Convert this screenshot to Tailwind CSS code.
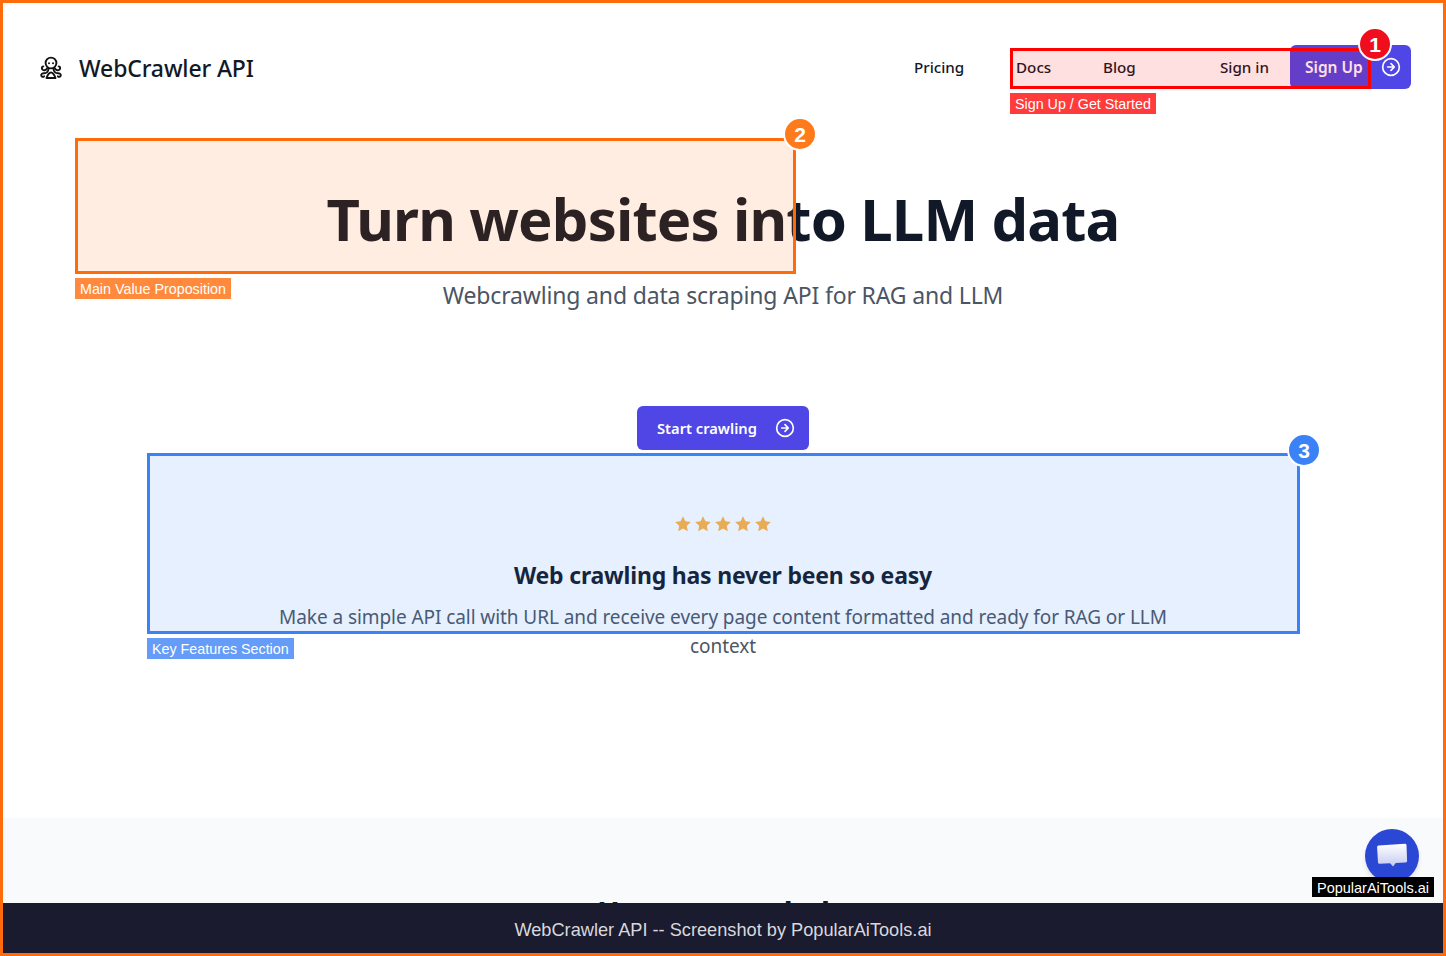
<!DOCTYPE html>
<html lang="en">
<head>
  <meta charset="UTF-8" />
  <title>WebCrawler API</title>
  <script src="https://cdn.jsdelivr.net/npm/@tailwindcss/browser@4"></script>
</head>
<body class="bg-white font-['Noto_Sans',sans-serif] text-[#111827]">
  <div class="relative h-[956px] w-[1446px] overflow-hidden border-[3px] border-[#ff6a0a]">

    <!-- Page -->
    <div class="flex h-[900px] flex-col overflow-hidden">
      <!-- Navigation -->
      <nav class="flex h-[86px] shrink-0 items-end justify-between pl-[36px] pr-[32px]">
        <div class="flex items-center gap-[16px] pb-[3px]">
          <svg class="h-[24px] w-[24px]" viewBox="0 0 24 24" fill="none" stroke="#111" stroke-width="1.900" stroke-linecap="round" stroke-linejoin="round">
            <circle cx="12" cy="7" r="5.400" fill="#fff"/>
            <circle cx="10" cy="7.300" r="1" fill="#111" stroke="none"/>
            <circle cx="14" cy="7.300" r="1" fill="#111" stroke="none"/>
            <path d="M8 12.500c-.8 1.500-2.800 2.200-4.300 1.200-1.500-1.100-1-3.300.6-3.300"/>
            <path d="M16 12.500c.8 1.500 2.800 2.200 4.300 1.200 1.500-1.100 1-3.300-.6-3.300"/>
            <path d="M9.500 13c-.3 2.800-2.300 4.200-4.500 4.200-1.800 0-3.200 1-2.700 2.500.4 1.200 2 1.500 2.800.6"/>
            <path d="M14.500 13c.3 2.800 2.300 4.200 4.500 4.200 1.800 0 3.200 1 2.700 2.500-.4 1.200-2 1.500-2.800.6"/>
            <path d="M7.500 22c1-2.800 2.800-5.500 4.500-5.500s3.500 2.700 4.500 5.500z"/>
          </svg>
          <span class="text-[23px] leading-[36px] font-medium tracking-[-0.13px] text-[#111827]">WebCrawler API</span>
        </div>
        <div class="flex items-center text-[15.200px] font-medium">
          <a class="w-[102px] pt-[1px]">Pricing</a>
          <a class="w-[87px] pt-[1px]">Docs</a>
          <a class="w-[117px] pt-[1px]">Blog</a>
          <a class="w-[70px] pt-[1px]">Sign in</a>
          <a class="flex h-[44px] w-[121px] items-center gap-[18px] rounded-[6px] bg-[#4f46e5] pl-[15px] text-[15.500px] font-semibold text-white">
            <span class="pt-[1px]">Sign Up</span>
            <svg class="h-[20px] w-[20px]" viewBox="0 0 24 24" fill="none" stroke="currentColor" stroke-width="2" stroke-linecap="round" stroke-linejoin="round"><circle cx="12" cy="12" r="10"/><path d="M8 12h8M12 8l4 4-4 4"/></svg>
          </a>
        </div>
      </nav>

      <!-- Hero -->
      <header class="flex shrink-0 flex-col items-center pt-[94px]">
        <h1 class="text-[58px] leading-[72px] font-bold tracking-[-0.85px] text-[#111827]">Turn websites into LLM data</h1>
        <p class="mt-[24px] text-[23px] leading-[32px] tracking-[-0.16px] text-[#4b5563]">Webcrawling and data scraping API for RAG and LLM</p>
        <a class="mt-[95px] flex h-[44px] w-[172px] items-center gap-[18px] rounded-[6px] bg-[#4f46e5] pl-[20px] text-[14.700px] font-semibold text-white">
          <span class="pt-[1px]">Start crawling</span>
          <svg class="h-[20px] w-[20px]" viewBox="0 0 24 24" fill="none" stroke="currentColor" stroke-width="2" stroke-linecap="round" stroke-linejoin="round"><circle cx="12" cy="12" r="10"/><path d="M8 12h8M12 8l4 4-4 4"/></svg>
        </a>
      </header>

      <!-- Feature -->
      <section class="mx-auto flex w-[920px] shrink-0 flex-col items-center pt-[64px] text-center">
        <div class="flex h-[20px] gap-0">
          <svg class="h-[20px] w-[20px] text-[#ffb23f]" viewBox="0 0 20 20" fill="currentColor"><path d="M10 2.300l2.400 5 5.400.7-4 3.800 1 5.400-4.800-2.600-4.800 2.600 1-5.400-4-3.800 5.400-.7z"/></svg>
          <svg class="h-[20px] w-[20px] text-[#ffb23f]" viewBox="0 0 20 20" fill="currentColor"><path d="M10 2.300l2.400 5 5.400.7-4 3.800 1 5.400-4.800-2.600-4.800 2.600 1-5.400-4-3.800 5.400-.7z"/></svg>
          <svg class="h-[20px] w-[20px] text-[#ffb23f]" viewBox="0 0 20 20" fill="currentColor"><path d="M10 2.300l2.400 5 5.400.7-4 3.800 1 5.400-4.800-2.600-4.800 2.600 1-5.400-4-3.800 5.400-.7z"/></svg>
          <svg class="h-[20px] w-[20px] text-[#ffb23f]" viewBox="0 0 20 20" fill="currentColor"><path d="M10 2.300l2.400 5 5.400.7-4 3.800 1 5.400-4.800-2.600-4.800 2.600 1-5.400-4-3.800 5.400-.7z"/></svg>
          <svg class="h-[20px] w-[20px] text-[#ffb23f]" viewBox="0 0 20 20" fill="currentColor"><path d="M10 2.300l2.400 5 5.400.7-4 3.800 1 5.400-4.800-2.600-4.800 2.600 1-5.400-4-3.800 5.400-.7z"/></svg>
        </div>
        <h2 class="mt-[25px] text-[23px] leading-[32px] font-bold tracking-[-0.2px] text-[#111827]">Web crawling has never been so easy</h2>
        <p class="mt-[12px] text-[19px] leading-[29px] tracking-[-0.07px] text-[#4b5563]">Make a simple API call with URL and receive every page content formatted and ready for RAG or LLM context</p>
      </section>

      <!-- Next section, cut off by the bottom bar -->
      <section class="mt-[157px] flex-1 bg-[#f9fafb] pt-[77px] text-center">
        <h2 class="text-[30px] leading-[36px] font-bold text-[#111827]">How we can help</h2>
      </section>
    </div>

    <!-- Bottom bar -->
    <div class="absolute inset-x-0 bottom-0 flex h-[50px] items-center justify-center bg-[#1a1b2e] pt-[5px] font-['Liberation_Sans',sans-serif] text-[18.200px] text-[#d8d8dc]">
      WebCrawler API -- Screenshot by PopularAiTools.ai
    </div>

    <!-- Chat bubble -->
    <div class="absolute left-[1362px] top-[826px] flex h-[54px] w-[54px] items-center justify-center rounded-full bg-[#2b48d4] shadow-md">
      <svg class="h-[32px] w-[32px]" viewBox="0 0 32 32">
        <defs><linearGradient id="chat" x1="0" y1="0" x2="0" y2="1"><stop offset="0" stop-color="#ffffff"/><stop offset="1" stop-color="#c4caf0"/></linearGradient></defs>
        <path d="M2.500 5.500 29 3.800a1.500 1.500 0 0 1 1.500 1.400l.6 15.800a1.500 1.500 0 0 1-1.400 1.500l-10 .6-2.600 3.400-3-3.200-10.600.5a1.500 1.500 0 0 1-1.500-1.400L1.100 7a1.500 1.500 0 0 1 1.400-1.500z" fill="url(#chat)"/>
      </svg>
    </div>
    <div class="absolute left-[1309px] top-[874px] h-[20px] w-[122px] bg-black pt-[1px] text-center font-['Liberation_Sans',sans-serif] text-[14.500px] leading-[20px] text-white">PopularAiTools.ai</div>

    <!-- Annotation 1 -->
    <div class="absolute left-[1007px] top-[45px] h-[41px] w-[361px] border-[3px] border-[#ff0000] bg-[#ff0000]/[0.12]"></div>
    <div class="absolute left-[1007px] top-[90px] h-[21px] bg-[#ff3b3b] px-[5px] pt-[1px] font-['Liberation_Sans',sans-serif] text-[14.300px] leading-[21px] text-white">Sign Up / Get Started</div>
    <div class="absolute left-[1355px] top-[24px] flex h-[34px] w-[34px] items-center justify-center rounded-full border-2 border-white bg-[#f00d1e] pt-[1px] font-['Liberation_Sans',sans-serif] text-[21px] font-bold text-white">1</div>

    <!-- Annotation 2 -->
    <div class="absolute left-[72px] top-[135px] h-[136px] w-[721px] border-[3px] border-[#ff6a0a] bg-[#ff6a0a]/[0.12]"></div>
    <div class="absolute left-[72px] top-[275px] h-[21px] bg-[#ff8a3d] px-[5px] pt-[1px] font-['Liberation_Sans',sans-serif] text-[14.300px] leading-[21px] text-white">Main Value Proposition</div>
    <div class="absolute left-[780px] top-[114px] flex h-[34px] w-[34px] items-center justify-center rounded-full border-2 border-white bg-[#ff7a1a] pt-[1px] font-['Liberation_Sans',sans-serif] text-[21px] font-bold text-white">2</div>

    <!-- Annotation 3 -->
    <div class="absolute left-[144px] top-[450px] h-[181px] w-[1153px] border-[3px] border-[#3b82f6] bg-[#3b82f6]/[0.12]"></div>
    <div class="absolute left-[144px] top-[635px] h-[21px] bg-[#649cf7] px-[5px] pt-[1px] font-['Liberation_Sans',sans-serif] text-[14.300px] leading-[21px] text-white">Key Features Section</div>
    <div class="absolute left-[1284px] top-[430px] flex h-[34px] w-[34px] items-center justify-center rounded-full border-2 border-white bg-[#3b82f6] pt-[1px] font-['Liberation_Sans',sans-serif] text-[21px] font-bold text-white">3</div>
  </div>
</body>
</html>
